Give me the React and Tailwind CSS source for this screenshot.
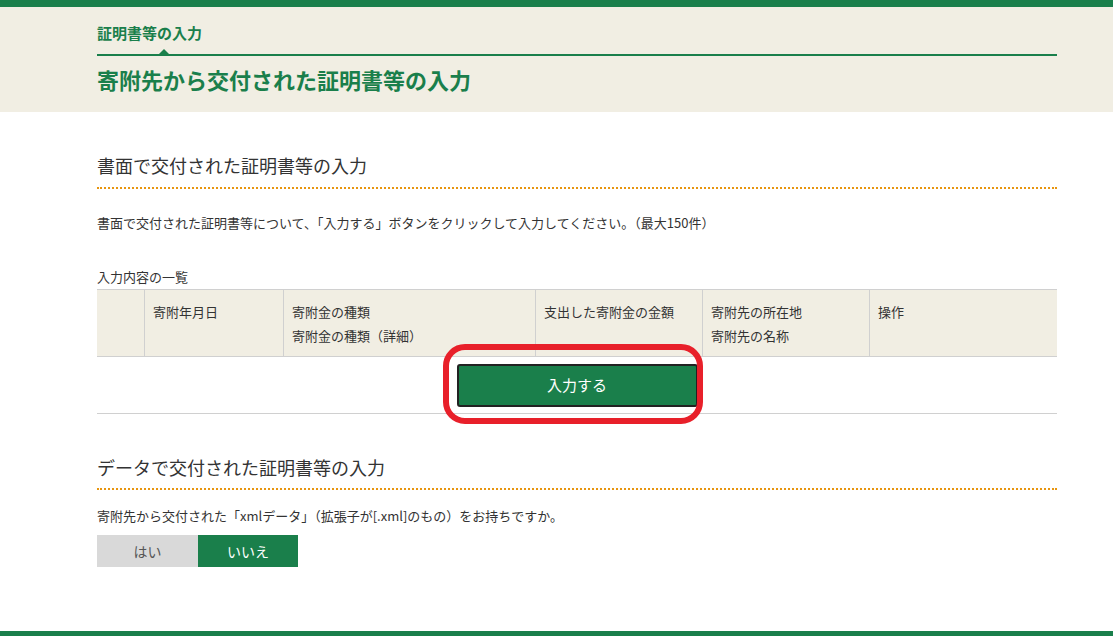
import React from 'react';

const font = { fontFamily: '"Noto Sans CJK JP", "Liberation Sans", sans-serif' };

export default function App() {
  const cols = [
    { w: 'w-[47px]', lines: [] },
    { w: 'w-[139px]', lines: ['寄附年月日'] },
    { w: 'w-[252px]', lines: ['寄附金の種類', '寄附金の種類（詳細）'] },
    { w: 'w-[167px]', lines: ['支出した寄附金の金額'] },
    { w: 'w-[167px]', lines: ['寄附先の所在地', '寄附先の名称'] },
    { w: 'flex-1', lines: ['操作'] },
  ];
  return (
    <div className="min-h-[636px] bg-white text-[#333] flex flex-col" style={font}>
      <div className="h-[7px] bg-[#1a7f4b]" />
      <div className="bg-[#f1eee3] h-[105px]">
        <div className="w-[960px] ml-[97px] pt-[15px]">
          <div className="text-[15px] font-bold text-[#1a7f4b] leading-[22px]">証明書等の入力</div>
          <div className="relative mt-[10px] h-[2px] bg-[#1a7f4b]">
            <div className="absolute left-[62px] -top-[5px] w-0 h-0 border-l-[5px] border-r-[5px] border-b-[5px] border-l-transparent border-r-transparent border-b-[#1a7f4b]" />
          </div>
          <div className="text-[22px] font-bold text-[#1a7f4b] leading-[30px] mt-[8px]">寄附先から交付された証明書等の入力</div>
        </div>
      </div>
      <div className="w-[960px] ml-[97px] flex-1">
        <div className="mt-[40px] text-[18px] leading-[26px] pb-[9px] border-b-2 border-dotted border-[#e8950f]">書面で交付された証明書等の入力</div>
        <div className="mt-[24px] text-[13px] leading-[20px]">書面で交付された証明書等について、「入力する」ボタンをクリックして入力してください。（最大150件）</div>
        <div className="mt-[34px] text-[13px] leading-[20px] pb-[2px]">入力内容の一覧</div>
        <div className="flex bg-[#f1eee3] border-t border-b border-[#d0d0d0] h-[68px] text-[13px]">
          {cols.map((c, i) => (
            <div key={i} className={`${c.w} ${i > 0 ? 'border-l border-[#d0d0d0]' : ''} px-[8px] pt-[10px] leading-[24px]`}>
              {c.lines.map((l) => <div key={l}>{l}</div>)}
            </div>
          ))}
        </div>
        <div className="relative flex justify-center border-b border-[#d0d0d0] pt-[7px] pb-[6px]">
          <button className="w-[241px] h-[43px] bg-[#1a7f4b] text-white text-[15px] rounded-[3px] border-2 border-[#222]">入力する</button>
          <div className="absolute left-[346px] -top-[13px] w-[260px] h-[80px] rounded-[22px] border-[6px] border-[#e8202a]" />
        </div>
        <div className="mt-[40px] text-[18px] leading-[26px] pb-[8px] border-b-2 border-dotted border-[#e8950f]">データで交付された証明書等の入力</div>
        <div className="mt-[16px] text-[13px] leading-[20px]">寄附先から交付された「xmlデータ」（拡張子が[.xml]のもの）をお持ちですか。</div>
        <div className="mt-[9px] flex text-[14px]">
          <div className="w-[101px] h-[32px] bg-[#d9d9d9] flex items-center justify-center text-[#555]">はい</div>
          <div className="w-[100px] h-[32px] bg-[#1a7f4b] flex items-center justify-center text-white">いいえ</div>
        </div>
      </div>
      <div className="h-[5px] bg-[#1a7f4b]" />
    </div>
  );
}
